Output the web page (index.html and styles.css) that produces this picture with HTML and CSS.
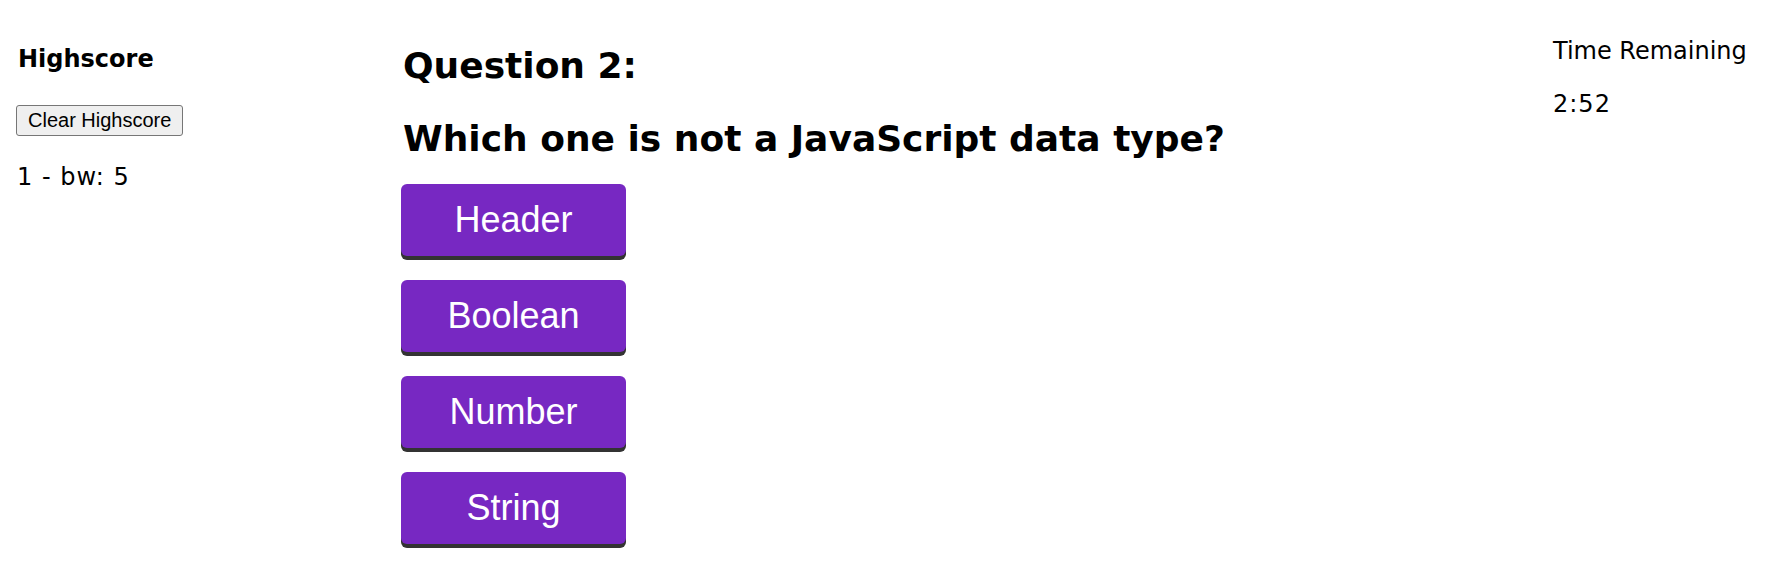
FILE: index.html
```html
<!DOCTYPE html>
<html lang="en">
<head>
<meta charset="utf-8">
<title>Quiz</title>
<link rel="stylesheet" href="styles.css">
</head>
<body>
<div class="page">
  <aside class="left">
    <h4 class="hs-title">Highscore</h4>
    <button class="clear-btn" type="button">Clear Highscore</button>
    <p class="score">1 - bw: 5</p>
  </aside>
  <main class="center">
    <h2 class="q-title">Question 2:</h2>
    <h2 class="q-text">Which one is not a JavaScript data type?</h2>
    <div class="answers">
      <button class="answer" type="button">Header</button>
      <button class="answer" type="button">Boolean</button>
      <button class="answer" type="button">Number</button>
      <button class="answer" type="button">String</button>
    </div>
  </main>
  <aside class="right">
    <p class="time-label">Time Remaining</p>
    <p class="time-value">2:52</p>
  </aside>
</div>
</body>
</html>
```

FILE: styles.css
```css
html, body {
  margin: 0;
  padding: 0;
  background: #ffffff;
  color: #000000;
  font-family: "DejaVu Sans", Verdana, sans-serif;
}

body {
  min-height: 582px;
}

.page {
  display: flex;
  align-items: flex-start;
  padding-bottom: 30px;
}

.left {
  width: 385px;
  padding-left: 16px;
  padding-top: 42px;
  display: flex;
  flex-direction: column;
  align-items: flex-start;
}

.hs-title {
  margin: 0;
  font-size: 24px;
  line-height: 34px;
  font-weight: bold;
  padding-left: 2px;
}

.clear-btn {
  margin-top: 29px;
  height: 31px;
  padding: 0 11px;
  font-family: "Liberation Sans", Arial, sans-serif;
  font-size: 20px;
  color: #000;
  background: #efefef;
  border: 1px solid #767676;
  border-radius: 3px;
}

.score {
  margin: 27px 0 0 1px;
  font-size: 24px;
  line-height: 28px;
  letter-spacing: 1px;
}

.center {
  flex: 1;
  padding-top: 45px;
}

.q-title,
.q-text {
  margin: 0;
  font-size: 36px;
  line-height: 42px;
  font-weight: bold;
  padding-left: 2px;
}

.q-text {
  margin-top: 31px;
}

.answers {
  margin-top: 24px;
  display: flex;
  flex-direction: column;
  align-items: flex-start;
  gap: 24px;
  padding-bottom: 8px;
}

.answer {
  width: 225px;
  height: 72px;
  border: none;
  border-radius: 6px;
  background: #7728c2;
  box-shadow: 0 4px 0 #333333;
  color: #ffffff;
  font-family: "Liberation Sans", Arial, sans-serif;
  font-size: 36px;
  padding: 0;
}

.right {
  width: 236px;
  padding-top: 37px;
}

.time-label {
  margin: 0;
  font-size: 24px;
  line-height: 28px;
}

.time-value {
  margin: 25px 0 0 0;
  font-size: 24px;
  line-height: 28px;
  letter-spacing: 1px;
}
```
